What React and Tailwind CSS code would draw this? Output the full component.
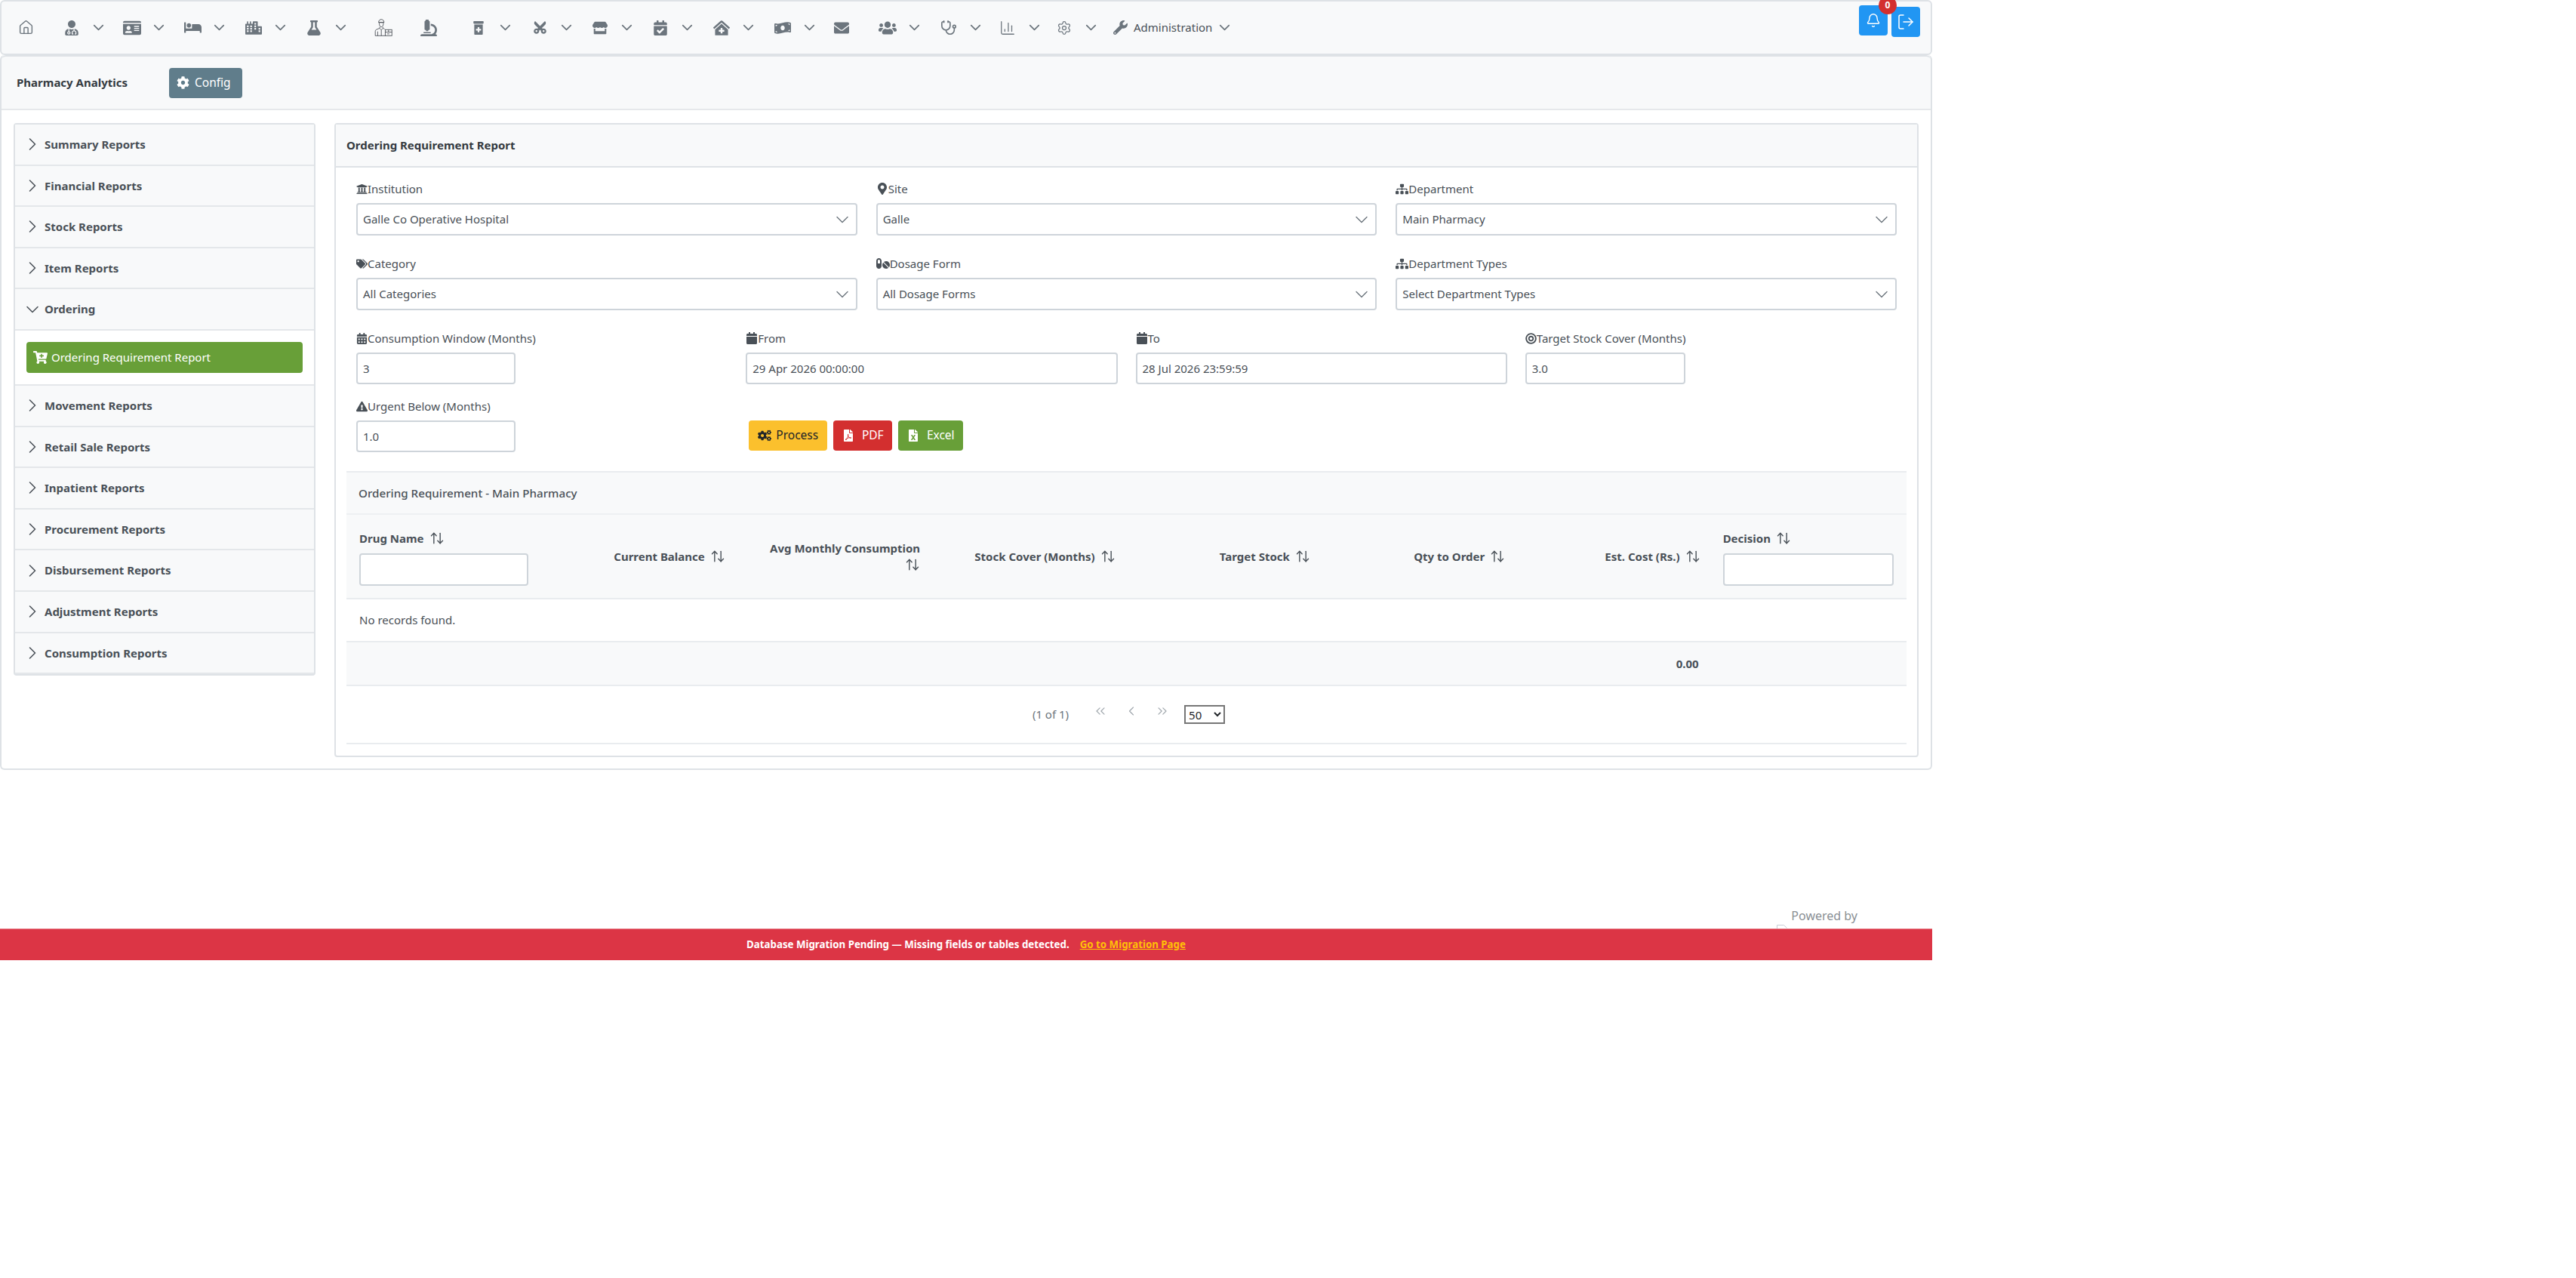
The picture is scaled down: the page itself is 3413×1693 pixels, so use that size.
import {
  FaUserMd, FaIdCard, FaBed, FaCity, FaFlask, FaMicroscope, FaPrescriptionBottleAlt, FaCut, FaStore,
  FaCalendarCheck, FaClinicMedical, FaMoneyBillWave, FaEnvelope, FaUsers, FaWrench, FaCog, FaCogs,
  FaUniversity, FaMapMarkerAlt, FaSitemap, FaTags, FaPills, FaCalendarAlt, FaCalendar, FaBullseye,
  FaExclamationTriangle, FaFilePdf, FaFileExcel, FaCartPlus,
} from "react-icons/fa"
import {
  Bell, ChevronDown, ChevronRight, ChevronLeft, ChevronsLeft, ChevronsRight, Home, LogOut, Settings,
  Stethoscope, ChartColumn, ArrowUpDown,
} from "lucide-react"

const font = "font-['Noto_Sans',sans-serif]"

const navItems = [
  { icon: <Home size={21} strokeWidth={1.6} />, w: "w-[61px]" },
  { icon: <FaUserMd size={20} />, w: "w-[80px]", caret: true },
  { icon: <FaIdCard size={24} />, w: "w-[80px]", caret: true },
  { icon: <FaBed size={23} />, w: "w-[81px]", caret: true },
  { icon: <FaCity size={22} />, w: "w-[80px]", caret: true },
  { icon: <FaFlask size={20} />, w: "w-[92px]", caret: true },
  { icon: <Pharmacist />, w: "w-[60px]" },
  { icon: <FaMicroscope size={22} />, w: "w-[66px]" },
  { icon: <FaPrescriptionBottleAlt size={18} />, w: "w-[81px]", caret: true },
  { icon: <FaCut size={19} className="-rotate-90" />, w: "w-[80px]", caret: true },
  { icon: <FaStore size={20} />, w: "w-[80px]", caret: true },
  { icon: <FaCalendarCheck size={20} />, w: "w-[81px]", caret: true },
  { icon: <FaClinicMedical size={22} />, w: "w-[81px]", caret: true },
  { icon: <FaMoneyBillWave size={22} />, w: "w-[78px]", caret: true },
  { icon: <FaEnvelope size={20} />, w: "w-[61px]" },
  { icon: <FaUsers size={24} />, w: "w-[81px]", caret: true },
  { icon: <Stethoscope size={22} strokeWidth={1.8} />, w: "w-[78px]", caret: true },
  { icon: <ChartColumn size={22} strokeWidth={1.4} />, w: "w-[75px]", caret: true },
  { icon: <Settings size={20} strokeWidth={1.5} />, w: "w-[77px]", caret: true },
]

const accordion = [
  "Summary Reports", "Financial Reports", "Stock Reports", "Item Reports", "Ordering",
  "Movement Reports", "Retail Sale Reports", "Inpatient Reports", "Procurement Reports",
  "Disbursement Reports", "Adjustment Reports", "Consumption Reports",
]

function Pharmacist() {
  return (
    <svg width="30" height="29" viewBox="0 0 30 29" fill="none" stroke="#4a4f55" strokeWidth="1.1">
      <path d="M7 6c0-3 2-5 4.500-5S16 3 16 6z" />
      <path d="M7 6h9M8 7c0 4 1.500 6.500 3.500 6.500S15 11 15 7" />
      <path d="M9 13.500v2l-6 2.500c-1 .5-1.500 1.500-1.500 3V28H18M14 13.500v2l3 1.500" />
      <path d="M5.500 21v7M9 16l2.500 2.500L14 16M11.500 18.500V28" />
      <rect x="18" y="18" width="11" height="10" />
      <path d="M18 22h11M23.500 18v4M21 25h4" />
    </svg>
  )
}

function NavItem({ icon, w, caret }) {
  return (
    <div className={`flex items-center text-[#6c757d] ${w}`}>
      <span className="flex w-[24px] justify-center">{icon}</span>
      {caret && <ChevronDown size={23} strokeWidth={1.8} className="ml-[12px]" />}
    </div>
  )
}

function FieldLabel({ icon, children }) {
  return (
    <label className="flex h-[18px] items-center text-[15px] text-[#495057]">
      <span className="flex text-[#495057]">{icon}</span>
      {children}
    </label>
  )
}

function SelectBox({ value }) {
  return (
    <div className="mt-[10px] flex h-[43px] items-center justify-between rounded-[4px] border-2 border-[#ced4da] bg-white pl-[7px] pr-[4px] text-[15px] text-[#495057]">
      <span>{value}</span>
      <ChevronDown size={28} strokeWidth={1.2} className="text-[#6c757d]" />
    </div>
  )
}

function TextBox({ value, className }) {
  return (
    <input
      readOnly
      value={value}
      className={`mt-[10px] h-[42px] rounded-[4px] border-2 border-[#ced4da] bg-white px-[7px] text-[15px] text-[#495057] outline-none ${className}`}
    />
  )
}

function SortIcon() {
  return <ArrowUpDown size={20} strokeWidth={1.7} className="ml-[7px] inline-block align-[-4px] text-[#495057]" />
}

const columns = [
  { label: "Current Balance" },
  { label: "Avg Monthly Consumption", wrap: true },
  { label: "Stock Cover (Months)" },
  { label: "Target Stock" },
  { label: "Qty to Order" },
  { label: "Est. Cost (Rs.)" },
]

export default function App() {
  return (
    <div className={`w-[2560px] bg-white ${font}`}>
      <div className="relative flex h-[73px] items-center rounded-[6px] border-2 border-[#dee2e6] bg-[#f8f9fa] pl-[20px]">
        {navItems.map((item, i) => (
          <NavItem key={i} {...item} />
        ))}
        <div className="flex items-center text-[#495057]">
          <FaWrench size={19} className="text-[#6c757d]" />
          <span className="ml-[8px] text-[15px]">Administration</span>
          <ChevronDown size={23} strokeWidth={1.8} className="ml-[5px] text-[#6c757d]" />
        </div>
        <div className="ml-auto mr-[14px] flex items-start gap-[5px] self-start pt-[5px]">
          <div className="relative flex h-[40px] w-[38px] items-center justify-center rounded-[4px] bg-[#2196f3] text-white">
            <Bell size={20} strokeWidth={1.7} />
            <span className="absolute -right-[12px] -top-[12px] flex h-[24px] w-[24px] items-center justify-center rounded-full bg-[#d32f2f] text-[12px] font-bold">0</span>
          </div>
          <div className="mt-[2px] flex h-[40px] w-[38px] items-center justify-center rounded-[4px] bg-[#2196f3] text-white">
            <LogOut size={24} strokeWidth={1.5} />
          </div>
        </div>
      </div>

      <div className="rounded-[6px] border-x-2 border-b-2 border-[#dee2e6]">
        <div className="flex h-[73px] items-center rounded-t-[6px] border-y-2 border-t-[#dee2e6] border-b-[#e6e8eb] bg-[#f8f9fa] pl-[20px]">
          <span className="w-[202px] text-[15px] font-bold text-[#343a40]">Pharmacy Analytics</span>
          <button className="flex h-[40px] w-[97px] items-center gap-[7px] rounded-[4px] bg-[#607d8b] pl-[10px] text-[15.5px] text-white">
            <FaCog size={17} />
            Config
          </button>
        </div>

        <div className="flex items-start gap-[25px] px-[16px] pb-[15px] pt-[17px]">
          <aside className="w-[400px] shrink-0 rounded-[4px] border-2 border-[#dee2e6]">
            {accordion.map((name) => (
              <div key={name}>
                <div className="flex h-[54.6px] items-center border-b-2 border-[#e4e7ea] bg-[#f8f9fa] text-[15px] font-bold text-[#495057]">
                  {name === "Ordering" ? (
                    <ChevronDown size={28} strokeWidth={1.3} className="ml-[9px] mr-[2px]" />
                  ) : (
                    <ChevronRight size={28} strokeWidth={1.3} className="ml-[9px] mr-[2px]" />
                  )}
                  {name}
                </div>
                {name === "Ordering" && (
                  <div className="border-b-2 border-[#e4e7ea] bg-white px-[15px] py-[15px]">
                    <div className="flex h-[41px] items-center rounded-[4px] bg-[#689f38] pl-[9px] text-[15px] text-white">
                      <FaCartPlus size={19} className="mr-[5px]" />
                      Ordering Requirement Report
                    </div>
                  </div>
                )}
              </div>
            ))}
          </aside>

          <section className="w-[2100px] rounded-[4px] border-2 border-[#dee2e6]">
            <div className="flex h-[57px] items-center border-b-2 border-[#dee2e6] bg-[#f8f9fa] pl-[14px] text-[15px] font-bold text-[#343a40]">
              Ordering Requirement Report
            </div>

            <div className="px-[14px] pb-[15px]">
              <div className="px-[13px] pt-[19px]">
                <div className="grid grid-cols-3 gap-x-[25px] gap-y-[28px]">
                  <div><FieldLabel icon={<FaUniversity size={15} />}>Institution</FieldLabel><SelectBox value="Galle Co Operative Hospital" /></div>
                  <div><FieldLabel icon={<FaMapMarkerAlt size={16} />}>Site</FieldLabel><SelectBox value="Galle" /></div>
                  <div><FieldLabel icon={<FaSitemap size={17} />}>Department</FieldLabel><SelectBox value="Main Pharmacy" /></div>
                  <div><FieldLabel icon={<FaTags size={15} />}>Category</FieldLabel><SelectBox value="All Categories" /></div>
                  <div><FieldLabel icon={<FaPills size={18} />}>Dosage Form</FieldLabel><SelectBox value="All Dosage Forms" /></div>
                  <div><FieldLabel icon={<FaSitemap size={17} />}>Department Types</FieldLabel><SelectBox value="Select Department Types" /></div>
                </div>

                <div className="mt-[28px] grid grid-cols-4 gap-x-[24px] gap-y-[20px]">
                  <div className="flex flex-col"><FieldLabel icon={<FaCalendarAlt size={15} />}>Consumption Window (Months)</FieldLabel><TextBox value="3" className="w-[211px]" /></div>
                  <div className="flex flex-col"><FieldLabel icon={<FaCalendar size={16} />}>From</FieldLabel><TextBox value="29 Apr 2026 00:00:00" className="w-full" /></div>
                  <div className="flex flex-col"><FieldLabel icon={<FaCalendar size={16} />}>To</FieldLabel><TextBox value="28 Jul 2026 23:59:59" className="w-full" /></div>
                  <div className="flex flex-col"><FieldLabel icon={<FaBullseye size={15} />}>Target Stock Cover (Months)</FieldLabel><TextBox value="3.0" className="w-[212px]" /></div>
                  <div className="flex flex-col"><FieldLabel icon={<FaExclamationTriangle size={15} />}>Urgent Below (Months)</FieldLabel><TextBox value="1.0" className="w-[211px]" /></div>
                  <div className="col-span-3 flex items-end gap-[8px] pb-[2px] pl-[4px]">
                    <button className="flex h-[40px] w-[104px] items-center justify-center gap-[6px] rounded-[4px] bg-[#fbc02d] text-[15.5px] text-[#212529]"><FaCogs size={18} />Process</button>
                    <button className="flex h-[40px] w-[78px] items-center justify-center gap-[10px] rounded-[4px] bg-[#d32f2f] text-[15.5px] text-white"><FaFilePdf size={16} />PDF</button>
                    <button className="flex h-[40px] w-[86px] items-center justify-center gap-[10px] rounded-[4px] bg-[#689f38] text-[15.5px] text-white"><FaFileExcel size={16} />Excel</button>
                  </div>
                </div>
              </div>

              <div className="mt-[25px]">
                <div className="flex h-[58px] items-center border-y-2 border-t-[#e9ecef] border-b-[#eef0f2] bg-[#f8f9fa] pl-[16px] text-[15.2px] font-medium text-[#495057]">
                  Ordering Requirement - Main Pharmacy
                </div>
                <table className="w-full table-fixed border-collapse text-[15px] text-[#495057]">
                  <thead>
                    <tr className="h-[111px] border-b-2 border-[#e9ecef] bg-[#f8f9fa]">
                      <th className="px-[17px] pt-[4px] text-left font-bold">
                        Drug Name<SortIcon />
                        <input className="mt-[8px] block h-[43px] w-full rounded-[4px] border-2 border-[#ced4da] bg-white" />
                      </th>
                      {columns.map((c) => (
                        <th key={c.label} className="px-[15px] text-right font-bold">
                          {c.label}
                          {c.wrap ? <br /> : null}
                          <SortIcon />
                        </th>
                      ))}
                      <th className="pl-[15px] pr-[17px] pt-[4px] text-left font-bold">
                        Decision<SortIcon />
                        <input className="mt-[8px] block h-[43px] w-full rounded-[4px] border-2 border-[#ced4da] bg-white" />
                      </th>
                    </tr>
                  </thead>
                  <tbody>
                    <tr className="h-[57px] border-b-2 border-[#e9ecef]">
                      <td colSpan={8} className="px-[17px]">No records found.</td>
                    </tr>
                  </tbody>
                  <tfoot>
                    <tr className="h-[58px] border-b-2 border-[#e9ecef] bg-[#f8f9fa]">
                      <td colSpan={6} />
                      <td className="px-[17px] text-right font-bold">0.00</td>
                      <td />
                    </tr>
                  </tfoot>
                </table>
                <div className="flex h-[77px] items-center justify-center border-b-2 border-[#e9ecef] pl-[6px] text-[15px] text-[#6c757d]">
                  <span>(1 of 1)</span>
                  <span className="ml-[32px] flex items-center gap-[21px] pb-[10px] text-[#a0a7ad]">
                    <ChevronsLeft size={20} strokeWidth={1.4} />
                    <ChevronLeft size={20} strokeWidth={1.4} />
                    <ChevronsRight size={20} strokeWidth={1.4} />
                  </span>
                  <select defaultValue="50" className="ml-[19px] h-[25px] w-[54px] border-2 border-[#767676] bg-white text-[15px] text-[#212529]">
                    <option>50</option>
                  </select>
                </div>
              </div>
            </div>
          </section>
        </div>
      </div>

      <div className="relative flex h-[210px] items-start justify-end pr-[99px] pt-[184px] text-[16px] leading-[18px] text-[#8a8f94]">
        Powered by
        <svg width="14" height="5" viewBox="0 0 14 5" fill="none" stroke="#c9ccd6" className="absolute bottom-0 left-[2354px]">
          <path d="M.5 5V.5h9l4 4" />
        </svg>
      </div>
      <div className="flex h-[42px] items-center justify-center gap-[14px] border-t border-[#e8808a] bg-[#dc3545] text-[13.3px] font-bold text-white">
        <span>Database Migration Pending — Missing fields or tables detected.</span>
        <a className="text-[#ffc107] underline">Go to Migration Page</a>
      </div>
    </div>
  )
}
